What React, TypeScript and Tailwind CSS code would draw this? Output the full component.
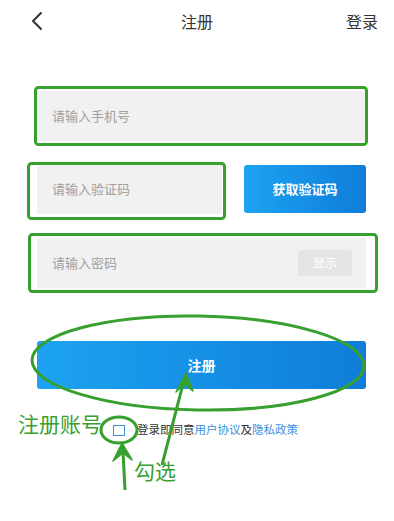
import React from "react";

const G = "#37a02f";

export default function App() {
  return (
    <div className="relative w-[394px] h-[521px] bg-white overflow-hidden font-['Noto_Sans_CJK_SC','Noto_Sans',sans-serif]">
      {/* header */}
      <div className="grid grid-cols-[1fr_auto_1fr] items-center h-[42px]">
        <div className="pl-[30px] flex items-center">
          <svg width="14" height="20" viewBox="0 0 14 20">
            <path d="M11 2 L3 10 L11 18" fill="none" stroke="#333" strokeWidth="2" strokeLinecap="round" strokeLinejoin="round" />
          </svg>
        </div>
        <div className="text-[16px] text-[#333] leading-none">注册</div>
        <div className="flex justify-end pr-[16px] text-[16px] text-[#333] leading-none">登录</div>
      </div>

      {/* form */}
      <div className="pl-[37px] pr-[28px] pt-[49px] flex flex-col">
        <div className="h-[50px] bg-[#f1f1f1] flex items-center pl-[15px] text-[13px] text-[#a0a0a0]">请输入手机号</div>
        <div className="mt-[23px] flex items-center gap-[22px]">
          <div className="w-[185px] h-[50px] bg-[#f1f1f1] flex items-center pl-[15px] text-[13px] text-[#a0a0a0]">请输入验证码</div>
          <div className="flex-1 h-[48px] rounded-[3px] bg-gradient-to-r from-[#1da3f1] to-[#0f7dd9] flex items-center justify-center text-white text-[13px] font-bold">获取验证码</div>
        </div>
        <div className="mt-[24px] h-[50px] bg-[#f1f1f1] flex items-center justify-between pl-[15px] pr-[14px] text-[13px] text-[#a0a0a0]">
          <span>请输入密码</span>
          <div className="w-[54px] h-[26px] rounded-[3px] bg-[#e5e5e5] flex items-center justify-center text-[12px] text-white">显示</div>
        </div>
        <div className="mt-[53px] h-[48px] rounded-[3px] bg-gradient-to-r from-[#1da3f1] to-[#0f7dd9] flex items-center justify-center text-white text-[14px] font-bold">注册</div>
        <div className="mt-[33px] flex items-center pl-[76px] h-[16px]">
          <div className="w-[12px] h-[11px] border-[1.5px] border-[#3a8fd8]" />
          <div className="ml-[12px] text-[11.5px] text-[#333] leading-none whitespace-nowrap">
            登录即同意<span className="text-[#3d8fdc]">用户协议</span>及<span className="text-[#3d8fdc]">隐私政策</span>
          </div>
        </div>
      </div>

      {/* annotations */}
      <svg className="absolute inset-0 pointer-events-none" width="394" height="521" viewBox="0 0 394 521">
        <rect x="35.5" y="87.5" width="331" height="57" rx="3" fill="none" stroke={G} strokeWidth="3" />
        <rect x="28.5" y="163.5" width="196" height="55" rx="3" fill="none" stroke={G} strokeWidth="3" />
        <rect x="29.5" y="234.5" width="347" height="57" rx="3" fill="none" stroke={G} strokeWidth="3" />
        <ellipse cx="198" cy="363" rx="166" ry="47" fill="none" stroke={G} strokeWidth="3" transform="rotate(1 198 363)" />
        <ellipse cx="119" cy="430" rx="18" ry="13" fill="none" stroke={G} strokeWidth="3" />
        {/* arrow to checkbox */}
        <path d="M125 490 L123 452" stroke={G} strokeWidth="3" fill="none" />
        <path d="M122 443 L132 460 L123 453 L113 461 Z" fill={G} stroke={G} strokeWidth="1.5" strokeLinejoin="round" />
        {/* arrow to button */}
        <path d="M162 465 L183 384" stroke={G} strokeWidth="3" fill="none" />
        <path d="M186 373 L193 391 L184 384 L176 392 Z" fill={G} stroke={G} strokeWidth="1.5" strokeLinejoin="round" />
      </svg>
      <div className="absolute left-[18px] top-[413px] text-[21px] leading-none text-[#3aa030]">注册账号</div>
      <div className="absolute left-[134px] top-[460px] text-[21px] leading-none text-[#3aa030]">勾选</div>
    </div>
  );
}
